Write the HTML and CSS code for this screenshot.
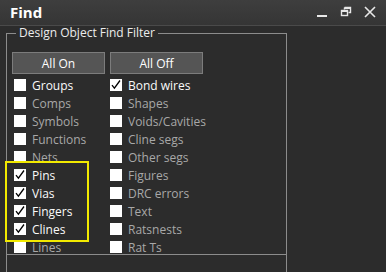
FILE: index.html
```html
<!DOCTYPE html>
<html>
<head>
<meta charset="utf-8">
<link rel="stylesheet" href="styles.css">
</head>
<body>
<div class="window">
  <div class="titlebar">
    <span class="title">Find</span>
    <div class="controls">
      <svg class="ctl" width="12" height="12" viewBox="0 0 12 12"><rect x="1" y="9" width="10" height="2" fill="#e8e8e8"/></svg>
      <svg class="ctl" width="12" height="12" viewBox="0 0 12 12"><path d="M4.5 1.5h6v5h-2M4.5 1.5v2" fill="none" stroke="#e8e8e8" stroke-width="1.4"/><rect x="1.5" y="4.5" width="6" height="5" fill="none" stroke="#e8e8e8" stroke-width="1.4"/><rect x="1.5" y="4.5" width="6" height="1.5" fill="#e8e8e8"/><rect x="4.5" y="1.5" width="6" height="1.5" fill="#e8e8e8"/></svg>
      <svg class="ctl" width="12" height="12" viewBox="0 0 12 12"><path d="M1 1l10 10M11 1L1 11" stroke="#e8e8e8" stroke-width="1.6"/></svg>
    </div>
  </div>
  <fieldset class="group">
    <legend>Design Object Find Filter</legend>
    <div class="buttons">
      <button class="btn">All On</button>
      <button class="btn">All Off</button>
    </div>
    <div class="grid">
      <div class="item on"><span class="box"></span>Groups</div>
      <div class="item"><span class="box"></span>Comps</div>
      <div class="item"><span class="box"></span>Symbols</div>
      <div class="item"><span class="box"></span>Functions</div>
      <div class="item"><span class="box"></span>Nets</div>
      <div class="item on"><span class="box"><svg viewBox="0 0 12 12" width="12" height="12"><path d="M2 6.2l2.4 3L10 1.5" fill="none" stroke="#000" stroke-width="1.3"/></svg></span>Pins</div>
      <div class="item on"><span class="box"><svg viewBox="0 0 12 12" width="12" height="12"><path d="M2 6.2l2.4 3L10 1.5" fill="none" stroke="#000" stroke-width="1.3"/></svg></span>Vias</div>
      <div class="item on"><span class="box"><svg viewBox="0 0 12 12" width="12" height="12"><path d="M2 6.2l2.4 3L10 1.5" fill="none" stroke="#000" stroke-width="1.3"/></svg></span>Fingers</div>
      <div class="item on"><span class="box"><svg viewBox="0 0 12 12" width="12" height="12"><path d="M2 6.2l2.4 3L10 1.5" fill="none" stroke="#000" stroke-width="1.3"/></svg></span>Clines</div>
      <div class="item"><span class="box"></span>Lines</div>
      <div class="item on"><span class="box"><svg viewBox="0 0 12 12" width="12" height="12"><path d="M2 6.2l2.4 3L10 1.5" fill="none" stroke="#000" stroke-width="1.3"/></svg></span>Bond wires</div>
      <div class="item"><span class="box"></span>Shapes</div>
      <div class="item"><span class="box"></span>Voids/Cavities</div>
      <div class="item"><span class="box"></span>Cline segs</div>
      <div class="item"><span class="box"></span>Other segs</div>
      <div class="item"><span class="box"></span>Figures</div>
      <div class="item"><span class="box"></span>DRC errors</div>
      <div class="item"><span class="box"></span>Text</div>
      <div class="item"><span class="box"></span>Ratsnests</div>
      <div class="item"><span class="box"></span>Rat Ts</div>
      <div class="highlight"></div>
    </div>
  </fieldset>
  <div class="group2"></div>
</div>
</body>
</html>
```
FILE: styles.css
```css
html, body {
  margin: 0;
  padding: 0;
}
body {
  background: #2c2c2c;
  width: 386px;
  height: 272px;
  overflow: hidden;
  font-family: "Open Sans", "Noto Sans", sans-serif;
  font-size: 12px;
  color: #f2f2f2;
}
.window {
  display: flex;
  flex-direction: column;
  height: 272px;
}
.titlebar {
  height: 26px;
  box-sizing: border-box;
  border-bottom: 1px solid #4a4a4a;
  background: linear-gradient(#3e3e3e, #353535);
  display: flex;
  align-items: center;
  justify-content: space-between;
  padding: 0 10px 0 10px;
}
.title {
  font-weight: bold;
  font-size: 15px;
  color: #fff;
  margin-top: -1px;
}
.controls {
  display: flex;
  gap: 12px;
  align-items: center;
  margin-top: -2px;
}
.ctl {
  display: block;
}
.group {
  margin: 0 99px 0 6px;
  padding: 0 0 0 5px;
  border: 1px solid #8c8c8c;
  min-width: 0;
  height: 229px;
  box-sizing: border-box;
}
.group legend {
  padding: 0 3px;
  margin-left: 4px;
  line-height: 14px;
  color: #ececec;
}
.buttons {
  display: flex;
  gap: 5px;
  margin-top: 12px;
}
.btn {
  width: 93px;
  height: 22px;
  background: #555555;
  border: 1px solid #7c7c7c;
  color: #fff;
  font-family: inherit;
  font-size: 12px;
  padding: 0;
}
.grid {
  position: relative;
  display: grid;
  grid-template-columns: 96px 96px;
  grid-template-rows: repeat(10, 18px);
  grid-auto-flow: column;
  margin-top: 2px;
  margin-left: 2px;
}
.item {
  display: flex;
  align-items: center;
  gap: 6px;
  color: #a8a8a8;
  white-space: nowrap;
}
.item.on {
  color: #fafafa;
}
.box {
  width: 12px;
  height: 12px;
  background: #fff;
  flex: none;
  display: block;
}
.box svg {
  display: block;
}
.highlight {
  position: absolute;
  left: -9px;
  top: 85px;
  width: 84px;
  height: 81px;
  border: 2px solid #f2ea00;
  box-sizing: border-box;
  pointer-events: none;
}
.group2 {
  flex: 1;
  margin: 0 99px 0 6px;
  border-left: 1px solid #8c8c8c;
  border-right: 1px solid #8c8c8c;
}
```
